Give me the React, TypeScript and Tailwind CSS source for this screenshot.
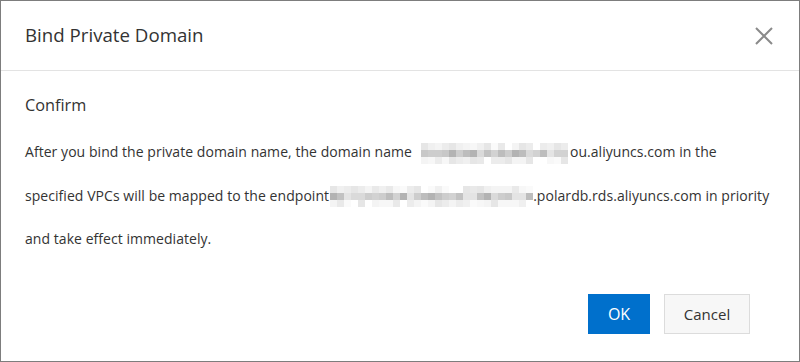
import React from "react";

const dark = ["bg-[#c8c8c8]", "bg-[#bdbdbd]", "bg-[#d2d2d2]", "bg-[#b3b3b3]", "bg-[#dadada]", "bg-[#c2c2c2]", "bg-[#e4e4e4]", "bg-[#cdcdcd]"];
const light = ["bg-[#f4f4f4]", "bg-[#ececec]", "bg-[#fafafa]", "bg-[#e6e6e6]", "bg-[#f0f0f0]", "bg-[#ffffff]", "bg-[#e9e9e9]", "bg-[#f7f7f7]"];

function Blur({ cols, rows, seed }: { cols: number; rows: number; seed: number }) {
  const cells: string[] = [];
  let s = seed;
  for (let i = 0; i < cols * rows; i++) {
    s = (s * 9301 + 49297) % 233280;
    const r = Math.floor((s / 233280) * 8);
    const row = Math.floor(i / cols);
    cells.push(row === 1 ? dark[r] : light[r]);
  }
  return (
    <span
      className="inline-grid align-middle"
      style={{ gridTemplateColumns: `repeat(${cols}, 7px)`, gridTemplateRows: `repeat(${rows}, 7px)` }}
    >
      {cells.map((c, i) => (
        <span key={i} className={c} />
      ))}
    </span>
  );
}

export default function App() {
  return (
    <div
      className="w-[800px] h-[362px] border border-[#7d7d7d] bg-white flex flex-col text-[#333]"
      style={{ fontFamily: '"Open Sans", "Noto Sans", sans-serif' }}
    >
      <div className="h-[70px] shrink-0 border-b border-[#e3e3e3] flex items-center justify-between pl-6 pr-[25px]">
        <div className="text-[18.7px]">Bind Private Domain</div>
        <svg width="18" height="18" viewBox="0 0 18 18" className="text-[#8a8a8a] mr-[1px]">
          <path d="M1 1 L17 17 M17 1 L1 17" stroke="currentColor" strokeWidth="2" fill="none" />
        </svg>
      </div>
      <div className="flex-1 pl-6 pt-[23px]">
        <div className="text-[16.3px] leading-[22px]">Confirm</div>
        <div className="mt-[14px] text-[14px] leading-[43.5px] tracking-[0.05px] whitespace-nowrap">
          <div className="flex items-center">
            <span>After you bind the private domain name, the domain name</span>
            <span className="ml-[9px] mr-[2px]"><Blur cols={21} rows={3} seed={7} /></span>
            <span>ou.aliyuncs.com in the</span>
          </div>
          <div className="flex items-center">
            <span>specified VPCs will be mapped to the endpoint</span>
            <span className="ml-[1px]"><Blur cols={29} rows={3} seed={31} /></span>
            <span>.polardb.rds.aliyuncs.com in priority</span>
          </div>
          <div>and take effect immediately.</div>
        </div>
      </div>
      <div className="flex justify-end gap-[14px] pr-[49px] pb-[27px]">
        <button className="w-[62px] h-[40px] bg-[#0070cc] text-white text-[16px]">OK</button>
        <button className="w-[86px] h-[40px] bg-[#f7f7f7] border border-[#dcdcdc] text-[#333] text-[15px]">Cancel</button>
      </div>
    </div>
  );
}
